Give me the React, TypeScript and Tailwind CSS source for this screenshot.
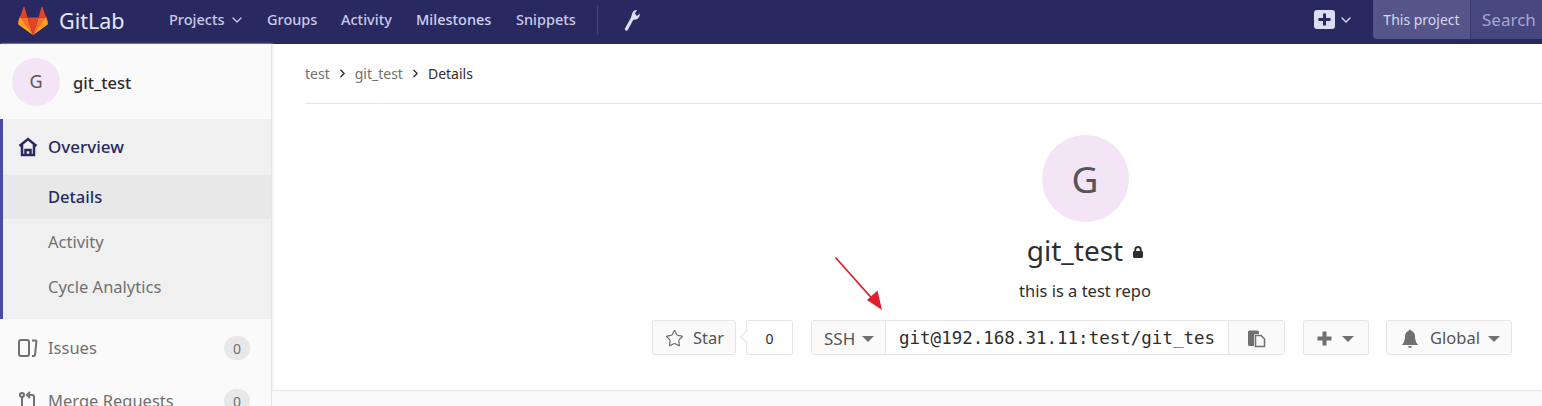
import { ChevronDown, ChevronRight, Star } from "lucide-react";

const font = "font-['Noto_Sans','Open_Sans',sans-serif]";

function Caret() {
  return <span className="inline-block w-0 h-0 border-x-[6px] border-x-transparent border-t-[6px] border-t-[#707070]" />;
}

function Logo() {
  return (
    <svg width="32" height="30" viewBox="0 0 32 30">
      <path d="M16 29 L1.5 18.5 Q0.5 17.5 1 16 L3 10 Z" fill="#fc6d26" />
      <path d="M16 29 L30.5 18.5 Q31.5 17.500 31 16 L29 10 Z" fill="#fc6d26" />
      <path d="M16 29 L10.5 11.5 H3 Z" fill="#fc6d26" />
      <path d="M16 29 L21.5 11.5 H29 Z" fill="#fc6d26" />
      <path d="M16 29 L10.5 11.5 H21.5 Z" fill="#e24329" />
      <path d="M3 11.5 L6.5 1 Q7 0.5 7.500 1 L10.5 11.5 Z" fill="#e24329" />
      <path d="M29 11.5 L25.5 1 Q25 0.5 24.500 1 L21.5 11.5 Z" fill="#e24329" />
      <path d="M1.5 18.5 L3 11.5 L16 29 Z" fill="#fca326" />
      <path d="M30.5 18.5 L29 11.5 L16 29 Z" fill="#fca326" />
    </svg>
  );
}

function Header() {
  return (
    <header className="h-[44px] shrink-0 bg-[#292961] flex items-center">
      <div className="ml-[17px] flex items-center w-[152px] -mt-[2px]">
        <Logo />
        <span className="ml-[10px] text-[21.5px] text-[#e6e6f2]">GitLab</span>
      </div>
      <nav className="flex items-center text-[14.5px] font-medium text-[#c9c9e6] -mt-[5px]">
        <span className="flex items-center gap-[4px] w-[98px]">
          Projects
          <ChevronDown size={16} strokeWidth={2} />
        </span>
        <span className="w-[74px]">Groups</span>
        <span className="w-[75px]">Activity</span>
        <span className="w-[100px] text-[#d1d1ef]">Milestones</span>
        <span className="w-[81px]">Snippets</span>
      </nav>
      <div className="w-px h-[30px] bg-[#45457a] -mt-[5px]" />
      <svg className="ml-[26px] -mt-[5px]" width="17" height="22" viewBox="0 0 17 22">
        <path d="M2.500 20 8.500 9" stroke="#dcdcee" strokeWidth="3.200" strokeLinecap="round" />
        <path d="M8.500 3.500 Q9.500 1 12 1 L13 1.300 L10.800 4.500 L13 7 L15.800 4.500 Q16.200 7.500 14 9.500 Q12 11 9.500 10.800 L6.800 9.500 Q7.500 6 8.500 3.500z" fill="#dcdcee" />
      </svg>
      <div className="ml-auto flex items-center h-full">
        <span className="w-[21px] h-[19px] rounded-[3px] bg-[#dcdcf2] flex items-center justify-center -mt-[5px]">
          <svg width="13" height="13" viewBox="0 0 13 13">
            <path d="M5 0.5h3v4.500h4.500v3H8v4.500H5V8H0.500V5H5z" fill="#292961" />
          </svg>
        </span>
        <ChevronDown size={16} strokeWidth={2.25} className="ml-[3px] text-[#d0d0ea] -mt-[5px]" />
        <div className="ml-[19px] h-[39px] self-start flex text-[#d7d7ec]">
          <span className="w-[98px] rounded-bl-[4px] bg-[#55558a] flex items-center justify-center text-[14px] border-r border-[#3b3b72]">
            This project
          </span>
          <span className="w-[71px] pl-[11px] bg-[#47477f] flex items-center text-[17px] text-[#a6a6ce]">Search</span>
        </div>
      </div>
    </header>
  );
}

function IssuesIcon() {
  return (
    <svg width="20" height="20" viewBox="0 0 20 20" fill="none" stroke="#707070" strokeWidth="2">
      <rect x="1" y="2" width="10" height="16" rx="2" />
      <path d="M14 2.500h3.500q1 0 .9 1L17 17q-.2 1-1.200 1H14" />
    </svg>
  );
}

function MergeIcon() {
  return (
    <svg width="20" height="20" viewBox="0 0 20 20" fill="none" stroke="#707070" strokeWidth="2">
      <circle cx="4" cy="4" r="2" />
      <path d="M4 6v14M16 20V6q0-2-2-2h-3M12 1 9 4l3 3" />
    </svg>
  );
}

function Sidebar() {
  return (
    <aside className="w-[272px] shrink-0 bg-[#fafafa] border-r border-[#e5e5e5] text-[16.5px] text-[#707070] shadow-[1px_0_2px_#eeeeee]">
      <div className="h-[75px] flex items-center pl-[12px] text-[#2e2e2e]">
        <span className="w-[48px] h-[48px] rounded-full bg-[#f3e5f5] flex items-center justify-center text-[18px] text-[#555555]">
          G
        </span>
        <span className="ml-[13px] mt-[3px] text-[16.5px] font-medium text-[#2e2e2e]">git_test</span>
      </div>
      <div className="border-l-[3px] border-[#4b4ba3] bg-[#f0f0f0] h-[200px]">
        <div className="h-[56px] flex items-center pl-[15px] text-[#292961] font-medium">
          <svg width="20" height="20" viewBox="0 0 20 20" fill="none" stroke="#292961" strokeWidth="2.500">
            <path d="M1.500 9 10 2l8.500 7M4 7.500V18h12V7.500M7.500 18v-5h5v5" />
          </svg>
          <span className="ml-[10px] text-[17px]">Overview</span>
        </div>
        <div className="h-[44px] flex items-center pl-[45px] bg-[#e8e8e8] text-[#292961] font-medium">Details</div>
        <div className="h-[45px] pt-[2px] flex items-center pl-[45px]">Activity</div>
        <div className="h-[45px] pt-[2px] flex items-center pl-[45px]">Cycle Analytics</div>
      </div>
      <div className="h-[58px] flex items-center pl-[18px] pr-[21px]">
        <IssuesIcon />
        <span className="ml-[10px]">Issues</span>
        <span className="ml-auto w-[26px] h-[24px] rounded-full bg-[#e8e8e8] flex items-center justify-center text-[14px]">0</span>
      </div>
      <div className="h-[48px] flex items-center pl-[18px] pr-[21px]">
        <MergeIcon />
        <span className="ml-[10px]">Merge Requests</span>
        <span className="ml-auto w-[26px] h-[24px] rounded-full bg-[#e8e8e8] flex items-center justify-center text-[14px]">0</span>
      </div>
    </aside>
  );
}

function Actions() {
  const btn = "h-[35px] pt-[2px] flex items-center bg-[#fafafa] border border-[#e5e5e5] rounded-[3px] text-[16.5px] text-[#555555]";
  return (
    <div className="flex justify-center items-center">
      <div className={btn + " w-[84px] pl-[12px]"}>
        <Star size={19} strokeWidth={1.5} className="text-[#707070]" />
        <span className="ml-[9px]">Star</span>
      </div>
      <div className="relative ml-[10px] w-[47px] h-[35px] pt-[2px] flex items-center justify-center border border-[#e5e5e5] rounded-[3px] bg-white text-[14px] text-[#2e2e2e]">
        <span className="absolute -left-[5px] top-[11px] w-[10px] h-[10px] rotate-45 bg-white border-l border-b border-[#e5e5e5]" />
        0
      </div>
      <div className="ml-[18px] flex h-[35px] w-[474px] border border-[#e5e5e5] rounded-[3px]">
        <div className="w-[74px] pt-[2px] bg-[#fafafa] border-r border-[#e5e5e5] flex items-center pl-[12px] gap-[7px] text-[17px] text-[#555555]">
          SSH <Caret />
        </div>
        <div className="flex-1 pt-[2px] flex items-center pl-[13px] font-['DejaVu_Sans_Mono',monospace] text-[17.5px] text-[#2e2e2e] whitespace-nowrap overflow-hidden">
          git@192.168.31.11:test/git_tes
        </div>
        <div className="w-[56px] pt-[2px] bg-[#fafafa] border-l border-[#e5e5e5] flex items-center justify-center">
          <svg width="19" height="19" viewBox="0 0 19 19">
            <path d="M1 3q0-1.500 1.500-1.500h8Q12 1.500 12 3v2H8.500Q7 5 7 6.500V17H2.500Q1 17 1 15.500z" fill="#707070" />
            <path d="M8.500 6.500H14l3.500 3.500v7.500H8.500z" fill="#fafafa" stroke="#707070" strokeWidth="1.500" />
          </svg>
        </div>
      </div>
      <div className={btn + " ml-[18px] w-[66px] pl-[13px] gap-[10px]"}>
        <svg width="15" height="15" viewBox="0 0 15 15">
          <path d="M5.500 0.500h4v5h5v4h-5v5h-4v-5h-5v-4h5z" fill="#707070" />
        </svg>
        <Caret />
      </div>
      <div className={btn + " ml-[17px] w-[126px] pl-[14px]"}>
        <svg width="18" height="20" viewBox="0 0 18 20">
          <path d="M9 0.500q1.300 0 1.500 1.500 3.500 1 3.500 5.500 0 5 3 8.500H1q3-3.500 3-8.500Q4 3 7.500 2 7.700 0.500 9 0.500zM7 17h4q-.5 2-2 2t-2-2z" fill="#707070" />
        </svg>
        <span className="ml-[11px] mr-[8px]">Global</span>
        <Caret />
      </div>
    </div>
  );
}

function Main() {
  return (
    <main className="w-[1626px] shrink-0 flex flex-col">
      <div className="ml-[33px] h-[60px] flex items-center border-b border-[#e5e5e5] text-[14px] text-[#707070]">
        test
        <ChevronRight size={13} strokeWidth={2.5} className="mx-[6px] text-[#2e2e2e]" />
        git_test
        <ChevronRight size={13} strokeWidth={2.5} className="mx-[6px] text-[#2e2e2e]" />
        <span className="text-[#2e2e2e]">Details</span>
      </div>
      <section className="h-[287px] border-b border-[#e5e5e5] pt-[31px] flex flex-col items-center">
        <div className="w-[87px] h-[87px] rounded-full bg-[#f3e5f5] flex items-center justify-center text-[37px] text-[#555555]">
          G
        </div>
        <div className="mt-[7px] flex items-center text-[28px] leading-[42px] text-[#2e2e2e]">
          git_test
          <svg className="ml-[10px] mt-[4px]" width="10" height="12" viewBox="0 0 11 13">
            <path d="M1.500 5.500V4a4 4 0 0 1 8 0v1.500q1.500 0 1.500 1.500v4.500q0 1.500-1.500 1.500h-8Q0 13 0 11.500V7q0-1.500 1.500-1.500zM3.500 5.500h4V4a2 2 0 0 0-4 0z" fill="#2e2e2e" />
          </svg>
        </div>
        <p className="mt-[8px] text-[16.5px] leading-[24px] text-[#2e2e2e]">this is a test repo</p>
        <div className="mt-[17px] ml-[-6px]">
          <Actions />
        </div>
      </section>
      <div className="flex-1 bg-[#fafafa]" />
    </main>
  );
}

export default function App() {
  return (
    <div className={font + " w-[1542px] h-[406px] overflow-hidden flex flex-col bg-white relative"}>
      <Header />
      <div className="flex flex-1 min-h-0">
        <Sidebar />
        <Main />
      </div>
      {/* annotation arrow added on top of the screenshot */}
      <svg className="absolute left-[830px] top-[252px]" width="56" height="62" viewBox="0 0 56 62">
        <path d="M5.500 5.500 46 51" stroke="#e0202e" strokeWidth="1.800" />
        <path d="M52 58 37 48 47.500 38.500z" fill="#e0202e" />
      </svg>
    </div>
  );
}
